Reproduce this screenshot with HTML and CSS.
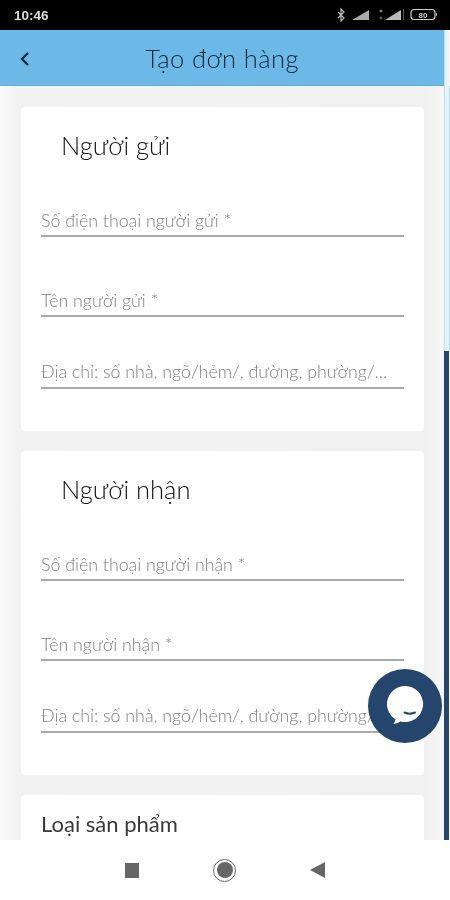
FILE: index.html
```html
<!DOCTYPE html>
<html lang="vi">
<head>
<meta charset="utf-8">
<title>Tạo đơn hàng</title>
<link rel="stylesheet" href="styles.css">
</head>
<body>
<div class="phone">
  <div class="status">
    <span class="time">10:46</span>
    <svg class="status-icons" width="106" height="16" viewBox="0 0 106 16">
      <path d="M4 5 L10 11 L7 14 V2 L10 5 L4 11" fill="none" stroke="#bbb" stroke-width="1.2"/>
      <path d="M18 13 L35 3 V13 Z" fill="#aaa"/>
      <circle cx="47" cy="4" r="1.600" fill="#777"/>
      <circle cx="47" cy="11" r="1.600" fill="#555"/>
      <path d="M51 13 L67 3 V13 Z" fill="#bbb"/>
      <rect x="69" y="2" width="1" height="11" fill="#555"/>
      <rect x="77" y="2.500" width="24" height="10" rx="3" fill="none" stroke="#ccc" stroke-width="1.200"/>
      <path d="M102 5.500 q2 2 0 4 Z" fill="#ccc"/>
      <text x="89" y="10.500" class="batt">80</text>
    </svg>
  </div>
  <div class="appbar">
    <div class="appbar-main">
      <svg class="back" width="12" height="16" viewBox="0 0 12 16"><path d="M9 2 L3 8 L9 14" fill="none" stroke="#14283a" stroke-width="2.2"/></svg>
      <h1 class="title">Tạo đơn hàng</h1>
    </div>
    <div class="bar-edge"></div>
  </div>
  <div class="body">
    <main class="content">
      <section class="card">
        <h2 class="card-title">Người gửi</h2>
        <div class="field first">Số điện thoại người gửi *</div>
        <div class="field">Tên người gửi *</div>
        <div class="field addr">Địa chỉ: số nhà, ngõ/hẻm/, đường, phường/...</div>
      </section>
      <section class="card">
        <h2 class="card-title">Người nhận</h2>
        <div class="field first">Số điện thoại người nhận *</div>
        <div class="field">Tên người nhận *</div>
        <div class="field addr">Địa chỉ: số nhà, ngõ/hẻm/, đường, phường/...</div>
      </section>
      <section class="card last">
        <h3 class="card-label">Loại sản phẩm</h3>
      </section>
    </main>
    <div class="scrollbar"><div class="scroll-track"></div><div class="scroll-thumb"></div></div>
    <button class="fab" aria-label="Chat">
      <svg width="44" height="44" viewBox="0 0 44 44">
        <path d="M22 2 A18 18 0 1 1 17.500 37.400 Q14 39.500 10.500 40 Q12.500 37 12.500 35.300 A18 18 0 0 1 22 2 Z" fill="#fff"/>
        <path d="M21.500 28.500 Q26.500 31 32 28.500" fill="none" stroke="#24466d" stroke-width="2" stroke-linecap="round"/>
      </svg>
    </button>
  </div>
  <nav class="navbar">
    <span class="nav-square"></span>
    <span class="nav-home"><span class="nav-home-dot"></span></span>
    <span class="nav-back"></span>
  </nav>
</div>
</body>
</html>
```
FILE: styles.css
```css
* { box-sizing: border-box; }
html, body { margin: 0; padding: 0; }
body { width: 450px; height: 900px; overflow: hidden; font-family: "Lato", "Noto Sans", sans-serif; }
.phone { width: 450px; height: 900px; display: flex; flex-direction: column; background: #fff; filter: blur(.45px); }

.status { height: 30px; flex: none; background: #000; display: flex; align-items: center; justify-content: space-between; padding: 0 10px 0 14px; }
.time { color: #ddd; font: 700 13.500px "Liberation Sans", sans-serif; }
.status-icons { display: block; }
.batt { font: 700 8px "Liberation Sans", sans-serif; fill: #ccc; text-anchor: middle; }

.appbar { height: 56px; flex: none; display: flex; }
.appbar-main { flex: 1; background: #6cb8e6; border-bottom: 1px solid #62acd9; display: flex; align-items: center; justify-content: center; position: relative; }
.bar-edge { width: 6px; flex: none; background: #e8f4fb; border-left: 1px solid #b8dcf2; border-right: 1px solid #fff; }
.back { position: absolute; left: 19px; top: 21px; }
.title { margin: 0; font-weight: 300; font-size: 25.500px; letter-spacing: .4px; color: #12293c; }

.body { flex: 1; min-height: 0; display: flex; position: relative; overflow: hidden; }
.content { flex: 1; min-width: 0; background: linear-gradient(90deg, #fafafa, #f2f2f2 18px, #f1f1f1 425px, #f6f6f6); padding: 21px 20px 0 21px; display: flex; flex-direction: column; gap: 20px; }
.card { flex: none; height: 324px; background: #fff; border-radius: 4px; padding: 0 20px; }
.card.last { height: 80px; }
.card-title { margin: 0; padding: 22px 0 0 20px; height: 67px; font-weight: 300; font-size: 25.500px; line-height: 32px; color: #111; }
.card-label { margin: 0; padding-top: 16px; font-weight: 400; font-size: 22px; line-height: 26px; color: #3a3a3a; }
.field { height: 80px; border-bottom: 2px solid #a9a9a9; display: flex; align-items: flex-end; padding-bottom: 4px; font-weight: 300; font-size: 17.800px; line-height: 22px; color: #808080; white-space: nowrap; overflow: hidden; }
.field.first { height: 63px; }
.field.addr { height: 72px; padding-bottom: 5px; }

.scrollbar { width: 6px; flex: none; background: #fff; display: flex; flex-direction: column; }
.scroll-track { height: 265px; flex: none; background: #e8f4fb; border-left: 1px solid #b8dcf2; border-right: 1px solid #b8dcf2; }
.scroll-thumb { flex: 1; background: #24466d; margin-right: 1px; }

.fab { position: absolute; left: 368px; top: 583px; width: 74px; height: 74px; padding: 0; border: 0; border-radius: 50%; background: #24466d; display: flex; align-items: center; justify-content: center; }

.navbar { height: 60px; flex: none; background: #fff; display: flex; align-items: center; justify-content: center; gap: 74px; }
.nav-square { width: 14px; height: 15px; background: #666; }
.nav-home { width: 23px; height: 23px; border: 1.500px solid #666; border-radius: 50%; display: flex; align-items: center; justify-content: center; }
.nav-home-dot { width: 16px; height: 16px; border-radius: 50%; background: #666; }
.nav-back { width: 0; height: 0; border-style: solid; border-width: 8px 15px 8px 0; border-color: transparent #666 transparent transparent; }
```
